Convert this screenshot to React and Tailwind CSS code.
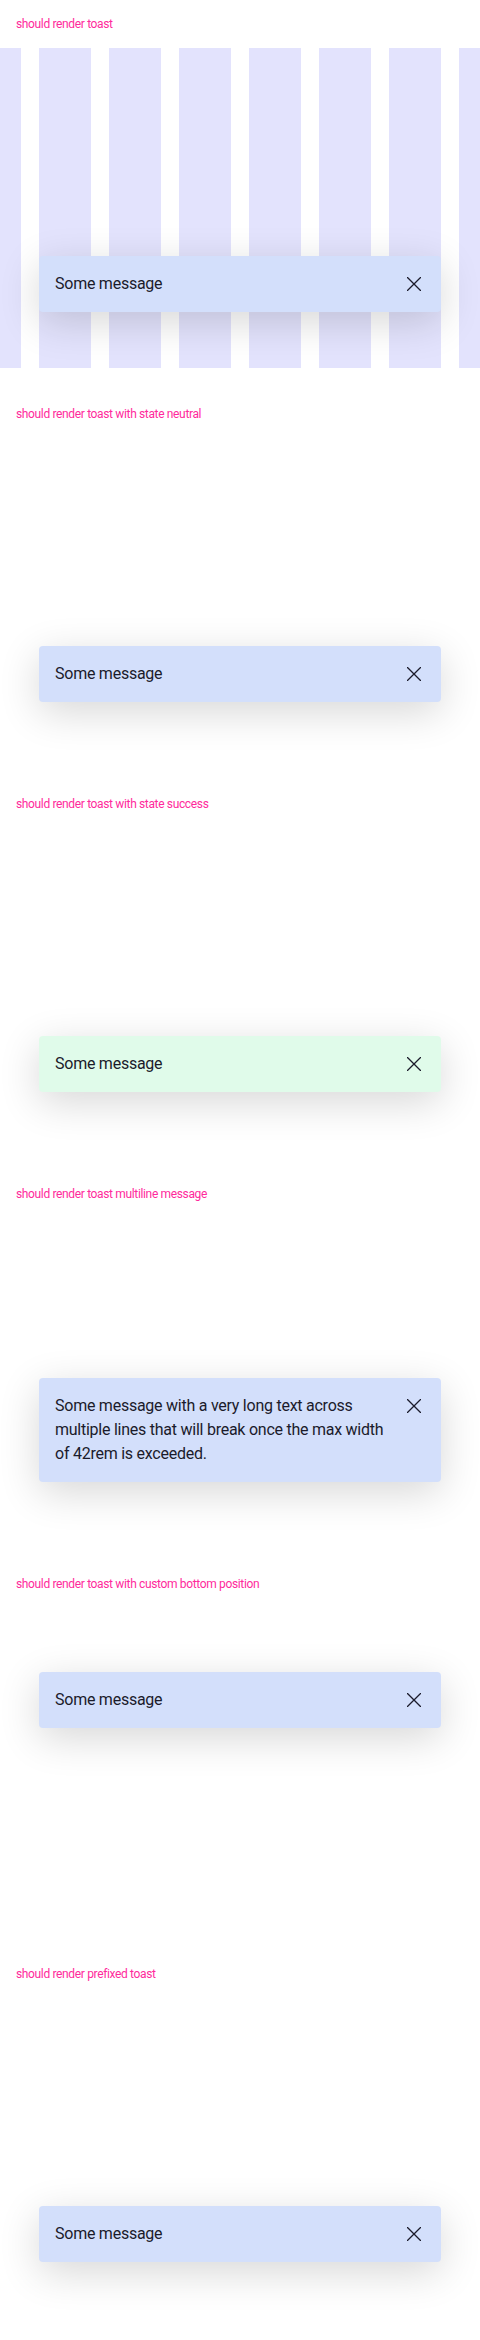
import React from "react";

function CloseIcon() {
  return (
    <svg width="14" height="14" viewBox="0 0 14 14" fill="none" className="shrink-0">
      <path d="M0.5 0.5L13.5 13.5M13.5 0.5L0.5 13.5" stroke="#1b1b2b" strokeWidth="1.3" strokeLinecap="square" />
    </svg>
  );
}

function Toast({ success, children, custom }) {
  return (
    <div
      className={`relative z-10 mx-[39px] mt-auto flex items-start gap-4 rounded pl-4 pr-5 py-4 shadow-[0_10px_40px_rgba(0,0,0,0.16)] ${
        custom ? "mb-[222px]" : "mb-[78px]"
      } ${success ? "bg-[#e0fbea]" : "bg-[#d3dffb]"}`}
    >
      <div className="flex-1 text-[16px] leading-6 tracking-[-0.25px] text-[#1b1b2b]">{children}</div>
      <div className="flex h-6 items-center">
        <CloseIcon />
      </div>
    </div>
  );
}

function Section({ title, children, grid }) {
  const cols = [0, 1, 2, 3, 4, 5, 6, 7];
  return (
    <section className="relative flex h-[390px] flex-col overflow-hidden">
      <h2 className="px-4 pt-4 text-[12px] leading-4 tracking-[-0.35px] text-[#ff2a9c]">{title}</h2>
      {grid && (
        <div className="absolute left-[-31px] top-12 flex h-[320px] gap-[18px]">
          {cols.map((c) => (
            <div key={c} className="h-full w-[52px] shrink-0 bg-[#e3e3fd]" />
          ))}
        </div>
      )}
      {children}
    </section>
  );
}

export default function App() {
  return (
    <div className="w-[480px] bg-white" style={{ fontFamily: "Roboto, 'Liberation Sans', sans-serif" }}>
      <Section title="should render toast" grid>
        <Toast>Some message</Toast>
      </Section>
      <Section title="should render toast with state neutral">
        <Toast>Some message</Toast>
      </Section>
      <Section title="should render toast with state success">
        <Toast success>Some message</Toast>
      </Section>
      <Section title="should render toast multiline message">
        <Toast>
          <div className="whitespace-nowrap">Some message with a very long text across</div>
          <div className="whitespace-nowrap">multiple lines that will break once the max width</div>
          <div className="whitespace-nowrap">of 42rem is exceeded.</div>
        </Toast>
      </Section>
      <Section title="should render toast with custom bottom position">
        <Toast custom>Some message</Toast>
      </Section>
      <Section title="should render prefixed toast">
        <Toast>Some message</Toast>
      </Section>
    </div>
  );
}
